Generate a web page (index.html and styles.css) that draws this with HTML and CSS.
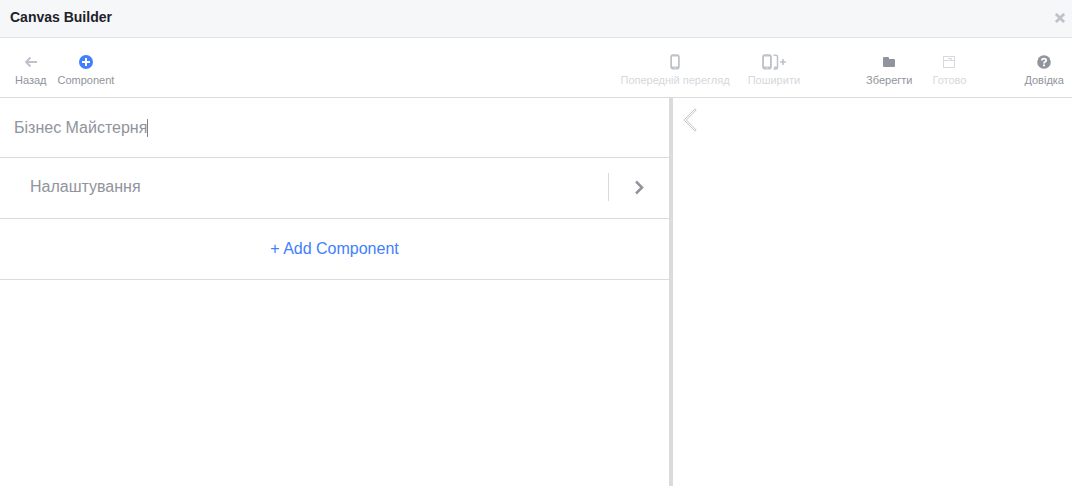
FILE: index.html
```html
<!DOCTYPE html>
<html lang="uk">
<head>
<meta charset="utf-8">
<title>Canvas Builder</title>
<link rel="stylesheet" href="styles.css">
</head>
<body>
<div class="app">
  <header class="header">
    <h1 class="title">Canvas Builder</h1>
    <button class="close" type="button" aria-label="Close">
      <svg width="10" height="10" viewBox="0 0 10 10"><path d="M.9.9 9.100 9.100M9.100.9.9 9.100" fill="none" stroke="#bec2c9" stroke-width="2.700"/></svg>
    </button>
  </header>
  <nav class="toolbar">
    <div class="group group-start">
      <button class="tool" type="button">
        <svg width="14" height="14" viewBox="0 0 14 14"><path d="M6.500 2.500 2 7l4.500 4.500M2 7h11" fill="none" stroke="#bec2c9" stroke-width="1.900"/></svg>
        <span>Назад</span>
      </button>
      <button class="tool" type="button">
        <svg width="14" height="14" viewBox="0 0 14 14"><circle cx="7" cy="7" r="7" fill="#4080ff"/><path d="M7 3v8M3 7h8" stroke="#fff" stroke-width="2"/></svg>
        <span>Component</span>
      </button>
    </div>
    <div class="group group-share">
      <button class="tool" type="button" disabled>
        <svg width="10" height="16" viewBox="0 0 10 16"><rect x=".8" y=".8" width="8.400" height="14.200" rx="1.500" fill="#bec2c9" stroke="#bec2c9"/><rect x="2" y="2.500" width="6" height="10" fill="#fff"/><path d="M4.500 14h1" stroke="#fff"/></svg>
        <span>Попередній перегляд</span>
      </button>
      <button class="tool" type="button" disabled>
        <svg width="24" height="16" viewBox="0 0 24 16"><rect x=".7" y=".8" width="8.600" height="14.200" rx="1.500" fill="#bec2c9" stroke="#bec2c9"/><rect x="2" y="2.500" width="6" height="10" fill="#fff"/><path d="M4.500 14h1" stroke="#fff"/><path d="M11.500 1.200h2.500q1.500 0 1.500 1.500v10.800q0 1.500-1.500 1.500h-2.500" fill="none" stroke="#bec2c9" stroke-width="1.500"/><path d="M12 13.500h3" stroke="#bec2c9" stroke-width="2"/><path d="M21 5v6M18 8h6" stroke="#bec2c9" stroke-width="1.600"/></svg>
        <span>Поширити</span>
      </button>
    </div>
    <div class="group group-save">
      <button class="tool" type="button">
        <svg width="12" height="14" viewBox="0 0 12 14"><path d="M0 3q0-1 1-1h4q1 0 1 1v1h5q1 0 1 1v6q0 1-1 1H1q-1 0-1-1z" fill="#90949c"/></svg>
        <span>Зберегти</span>
      </button>
      <button class="tool" type="button" disabled>
        <svg width="12" height="14" viewBox="0 0 12 14"><path d="M.5 1.500h11v11H.5zM.5 5.500h11M5 3.500h3.500M8.500 3.500v2" fill="none" stroke="#d5d8dc"/></svg>
        <span>Готово</span>
      </button>
    </div>
    <div class="group">
      <button class="tool" type="button">
        <svg width="14" height="14" viewBox="0 0 14 14"><circle cx="7" cy="7" r="6.800" fill="#90949c"/><path d="M4.800 5.500Q4.900 3.600 7 3.600t2.200 1.700Q9.200 6.300 8 6.900 7 7.400 7 8.600" fill="none" stroke="#fff" stroke-width="1.800"/><path d="M6 9.600h2v1.700H6z" fill="#fff"/></svg>
        <span>Довідка</span>
      </button>
    </div>
  </nav>
  <div class="content">
    <main class="editor">
      <div class="name-row">
        <input class="name" type="text" value="Бізнес Майстерня" aria-label="Canvas name">
        <span class="caret"></span>
      </div>
      <button class="settings" type="button">
        <span class="settings-label">Налаштування</span>
        <span class="chevron"><svg width="10" height="16" viewBox="0 0 10 16"><path d="M2 2.500 8 8.500l-6 6" fill="none" stroke="#90949c" stroke-width="2.500"/></svg></span>
      </button>
      <button class="add" type="button">+ Add Component</button>
    </main>
    <aside class="preview">
      <button class="back" type="button" aria-label="Previous">
        <svg width="14" height="24" viewBox="0 0 14 24"><path d="M12 1 .9 12 12 23l1.200-1L3.300 12l9.900-10z" fill="#fff" stroke="#b4b8be" stroke-width=".8"/></svg>
      </button>
    </aside>
  </div>
</div>
</body>
</html>
```
FILE: styles.css
```css
* {
  box-sizing: border-box;
}

body {
  margin: 0;
  font-family: "Liberation Sans", Arial, sans-serif;
  font-size: 16px;
  color: #90949c;
  background: #fff;
}

button,
input {
  margin: 0;
  padding: 0;
  border: 0;
  background: none;
  font: inherit;
  color: inherit;
}

svg {
  display: block;
}

.app {
  display: flex;
  flex-direction: column;
  min-height: 100vh;
}

.header {
  display: flex;
  align-items: center;
  justify-content: space-between;
  padding: 9px 7px 12px 10px;
  background: #f6f7f9;
  border-bottom: 1px solid #e1e2e4;
}

.title {
  margin: 0;
  font-size: 14px;
  line-height: 16px;
  color: #1d2129;
}

.close {
  padding-top: 2px;
}

.toolbar {
  display: flex;
  padding: 16px 8px 9px 15px;
  border-bottom: 1px solid #dadbdd;
}

.group {
  display: flex;
  gap: 20px;
}

.group-start {
  gap: 11px;
  margin-right: auto;
}

.group-share {
  gap: 18px;
  margin-right: 66px;
}

.group-save {
  margin-right: 58px;
}

.tool {
  display: grid;
  grid-template-rows: 16px 16px;
  row-gap: 2px;
  place-items: center;
  font-size: 11px;
  line-height: 16px;
  white-space: nowrap;
}

.tool:disabled {
  color: #d5d8dc;
}

.content {
  display: flex;
  flex: 1;
}

.editor {
  flex: 1;
  min-width: 0;
}

.name-row {
  display: flex;
  align-items: center;
  padding: 20px 14px 19px;
  border-bottom: 1px solid #dadbdd;
}

.name {
  field-sizing: content;
  height: 20px;
  outline: 0;
}

.caret {
  width: 1px;
  height: 18px;
  background: #7f838a;
}

.settings {
  display: flex;
  align-items: center;
  justify-content: space-between;
  width: 100%;
  height: 61px;
  padding: 0 0 3px 30px;
  border-bottom: 1px solid #dadbdd;
}

.chevron {
  display: grid;
  place-items: center;
  width: 61px;
  height: 28px;
  border-left: 1px solid #dadbdd;
}

.add {
  width: 100%;
  height: 61px;
  border-bottom: 1px solid #dadbdd;
  color: #4080ff;
}

.preview {
  width: 403px;
  padding: 10px;
  border-left: 4px solid #dadbdd;
}
```
